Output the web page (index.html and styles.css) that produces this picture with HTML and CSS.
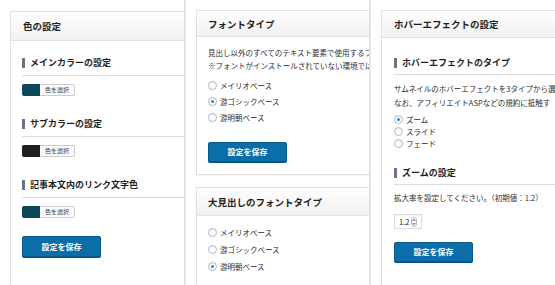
FILE: index.html
```html
<!DOCTYPE html>
<html lang="ja">
<head>
<meta charset="utf-8">
<title>テーマ設定</title>
<link rel="stylesheet" href="styles.css">
</head>
<body>
<div class="frame">
  <div class="col col1">
    <section class="panel panel-tall">
      <div class="ph ph1">色の設定</div>
      <div class="pb pb1">
        <h3 class="sh first">メインカラーの設定</h3>
        <div class="picker"><span class="sw teal"></span><span class="pk">色を選択</span></div>
        <h3 class="sh">サブカラーの設定</h3>
        <div class="picker"><span class="sw dark"></span><span class="pk">色を選択</span></div>
        <h3 class="sh">記事本文内のリンク文字色</h3>
        <div class="picker"><span class="sw teal"></span><span class="pk">色を選択</span></div>
        <button class="save save1">設定を保存</button>
      </div>
    </section>
  </div>
  <div class="sep"></div>
  <div class="col col2">
    <section class="panel">
      <div class="ph ph2">フォントタイプ</div>
      <div class="pb pb2">
        <p class="para para2">見出し以外のすべてのテキスト要素で使用するフ<br>※フォントがインストールされていない環境では</p>
        <ul class="radios r16">
          <li><span class="rd"></span>メイリオベース</li>
          <li><span class="rd on"></span>游ゴシックベース</li>
          <li><span class="rd"></span>游明朝ベース</li>
        </ul>
        <button class="save save2">設定を保存</button>
      </div>
    </section>
    <section class="panel panel-tall second">
      <div class="ph ph3">大見出しのフォントタイプ</div>
      <div class="pb pb3">
        <ul class="radios r17">
          <li><span class="rd"></span>メイリオベース</li>
          <li><span class="rd"></span>游ゴシックベース</li>
          <li><span class="rd on"></span>游明朝ベース</li>
        </ul>
      </div>
    </section>
  </div>
  <div class="sep"></div>
  <div class="col col3">
    <section class="panel panel-tall">
      <div class="ph ph4">ホバーエフェクトの設定</div>
      <div class="pb pb4">
        <h3 class="sh sh3 first3">ホバーエフェクトのタイプ</h3>
        <p class="para para3">サムネイルのホバーエフェクトを3タイプから選<br>なお、アフィリエイトASPなどの規約に抵触す</p>
        <ul class="radios r12">
          <li><span class="rd on"></span>ズーム</li>
          <li><span class="rd"></span>スライド</li>
          <li><span class="rd"></span>フェード</li>
        </ul>
        <h3 class="sh sh3 zoomh">ズームの設定</h3>
        <p class="para para4">拡大率を設定してください。（初期値：1.2）</p>
        <div class="num"><span class="numv">1.2</span><svg class="spin" width="6" height="10" viewBox="0 0 6 10"><rect x="0.5" y="0.5" width="5" height="9" rx="2.5" fill="#fff" stroke="#b9b9b9"/><path d="M1.6 4 L3 2.4 L4.4 4" fill="none" stroke="#444" stroke-width="0.9"/><path d="M1.6 6 L3 7.6 L4.4 6" fill="none" stroke="#444" stroke-width="0.9"/></svg></div>
        <button class="save save3">設定を保存</button>
      </div>
    </section>
  </div>
</div>
</body>
</html>
```
FILE: styles.css
```css
* { box-sizing: border-box; }
html, body { margin: 0; padding: 0; background: #fff; }
body {
  width: 555px;
  height: 285px;
  overflow: hidden;
  font-family: "Noto Sans CJK JP", "Noto Sans", sans-serif;
  color: #333;
}
.frame { display: flex; height: 285px; }
.col { overflow: hidden; height: 285px; background: #fff; }
.col1 { width: 184px; padding: 11px 0 0 10px; }
.col2 { width: 183px; padding: 10px 0 0 10px; }
.col3 { flex: 1; padding: 10px 0 0 10px; }
.sep { width: 2px; height: 285px; background: linear-gradient(to right, #dcdcdc, #ececec); }

.panel {
  width: 330px;
  border: 1px solid #e1e1e1;
  background: #fff;
  box-shadow: 0 1px 1px rgba(0,0,0,0.03);
}
.panel-tall { min-height: 320px; }
.second { margin-top: 12px; }

.ph {
  background: linear-gradient(to bottom, #ffffff, #f1f1f1);
  border-bottom: 1px solid #e2e2e2;
  font-weight: bold;
  font-size: 9.5px;
  color: #1e1e1e;
  padding-left: 12px;
  white-space: nowrap;
}
.ph1 { height: 29px; line-height: 28px; }
.ph2 { height: 26px; line-height: 26px; padding-left: 11px; }
.ph3 { height: 28px; line-height: 28px; padding-left: 11px; }
.ph4 { height: 27px; line-height: 27px; }

.pb { padding-left: 11px; }
.pb1 { padding-top: 15px; }
.pb2 { padding-top: 9px; padding-bottom: 12px; }
.pb3 { padding-top: 8px; }
.pb4 { padding-top: 18px; padding-left: 12px; }

.sh {
  margin: 0;
  font-size: 9px;
  font-weight: bold;
  color: #1e1e1e;
  line-height: 13px;
  padding: 0 0 6px 8px;
  border-bottom: 1px solid #dedede;
  position: relative;
  white-space: nowrap;
}
.sh::before {
  content: "";
  position: absolute;
  left: 0;
  top: 2px;
  width: 3px;
  height: 10px;
  background: #6a7486;
}
.sh + .picker { margin-top: 8px; }
.picker + .sh { margin-top: 21px; }
.sh3 { padding-bottom: 5px; }
.zoomh { margin-top: 17px; }

.picker { display: flex; height: 12px; }
.sw { width: 18px; height: 12px; border-radius: 2px 0 0 2px; }
.teal { background: #0d4858; }
.dark { background: #1f1f1f; }
.pk {
  width: 35px;
  height: 12px;
  border: 1px solid #cdcdcd;
  border-left: none;
  border-radius: 0 2px 2px 0;
  background: #fafafa;
  font-size: 6px;
  line-height: 10px;
  color: #444;
  text-align: center;
}

.para {
  margin: 0;
  font-size: 7.5px;
  color: #2e2e2e;
  white-space: nowrap;
}
.para2 { line-height: 13px; }
.para3 { line-height: 14px; margin-top: 7px; }
.para4 { line-height: 14px; margin-top: 6px; }

.radios { list-style: none; margin: 0; padding: 0; font-size: 7.5px; color: #2a2a2a; }
.radios li { display: flex; align-items: center; white-space: nowrap; }
.r16 { margin-top: 5px; }
.r16 li { height: 16px; }
.r17 li { height: 17px; }
.r12 { margin-top: 3px; }
.r12 li { height: 12px; }
.rd {
  width: 9px;
  height: 9px;
  border: 1px solid #b4b9be;
  border-radius: 50%;
  background: #fff;
  margin-right: 3px;
  box-shadow: inset 0 1px 1px rgba(0,0,0,0.08);
  display: flex;
  align-items: center;
  justify-content: center;
}
.rd.on::after {
  content: "";
  width: 3px;
  height: 3px;
  border-radius: 50%;
  background: #1e8cbe;
}

.num {
  margin-top: 9px;
  width: 28px;
  height: 15px;
  border: 1px solid #dcdcdc;
  display: flex;
  align-items: center;
  padding-left: 4px;
  gap: 2px;
  font-size: 7.5px;
  color: #222;
  box-shadow: inset 0 1px 1px rgba(0,0,0,0.05);
}

.save {
  display: block;
  width: 79px;
  height: 21px;
  padding: 0;
  border: 1px solid #075a8a;
  border-radius: 2px;
  background: #0b6ea8;
  box-shadow: 0 1px 0 #06557f;
  color: #fff;
  font-family: "Noto Sans CJK JP", "Noto Sans", sans-serif;
  font-size: 8px;
  font-weight: bold;
  line-height: 19px;
  text-align: center;
}
.save1 { margin-top: 18px; }
.save2 { margin-top: 17px; height: 20px; line-height: 18px; }
.save3 { margin-top: 13px; height: 20px; line-height: 18px; }
```
